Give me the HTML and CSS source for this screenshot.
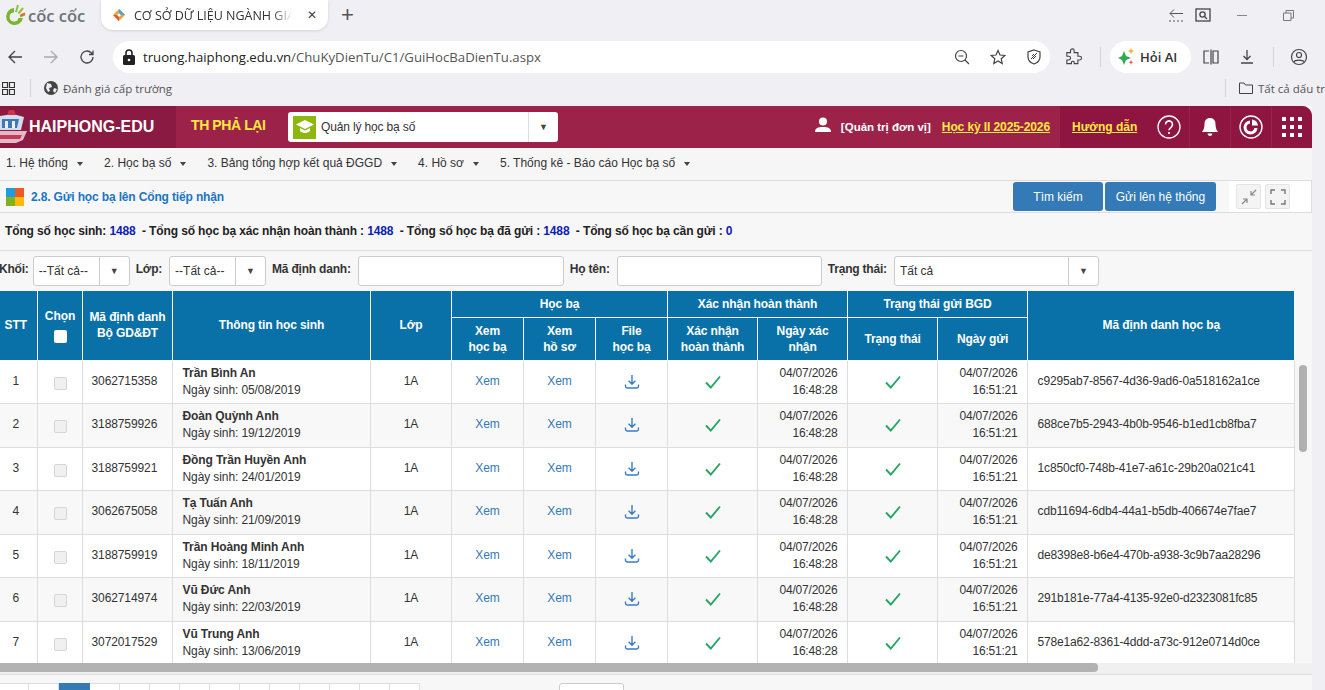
FILE: index.html
```html
<!DOCTYPE html>
<html lang="vi">
<head>
  <meta charset="UTF-8">
  <title>CƠ SỞ DỮ LIỆU NGÀNH GIÁO DỤC</title>
  <link rel="stylesheet" href="styles.css">
</head>
<body>
<svg class="defs" width="0" height="0">
  <symbol id="dl" viewBox="0 0 16 16"><path d="M8 1v9M4.6 6.8 8 10.2l3.4-3.4M1.5 10.5v1.8c0 1 .7 1.7 1.7 1.7h9.6c1 0 1.7-.7 1.7-1.7v-1.8" fill="none" stroke="#3a7cc4" stroke-width="1.4"/></symbol>
  <symbol id="ok" viewBox="0 0 16 14"><path d="M1 7.5 5.8 12.5 15 1.5" fill="none" stroke="#27a567" stroke-width="1.9"/></symbol>
</svg>

<!-- thanh trinh duyet -->
<div class="tabstrip">
  <div class="brand">
    <svg width="22" height="22" viewBox="0 0 22 22"><path d="M10 4a8.500 8.500 0 1 0 9 10h-4.500a4.500 4.500 0 1 1-4.500-5.500z" fill="#7ab52f"/><path d="M12 8l2-7M14.500 9.500 19 4M16 12.500l5-2" stroke="#8fc43a" stroke-width="2"/><path d="M16.500 11.500l4.500-2" stroke="#e8663a" stroke-width="2"/></svg>
    <span>cốc cốc</span>
  </div>
  <div class="tab">
    <svg width="14" height="14" viewBox="0 0 14 14"><path d="M7 1 13 7 7 13 1 7z" fill="#e8a33a"/><path d="M7 1 13 7 7 7z" fill="#3fa7d6"/><path d="M1 7 7 13 7 7z" fill="#e5533a"/><circle cx="7" cy="7" r="1.6" fill="#fff"/></svg>
    <span class="tab-title">CƠ SỞ DỮ LIỆU NGÀNH GIÁ</span>
    <span class="tab-x">✕</span>
  </div>
  <span class="newtab">+</span>
  <div class="winctl">
    <svg class="win-back" width="16" height="16" viewBox="0 0 16 16"><path d="M15 6.500H2M6 2.500 2 6.500l4 4" fill="none" stroke="#555"/><path d="M1 14h14" stroke="#555" stroke-dasharray="2 2"/></svg>
    <svg class="win-find" width="16" height="16" viewBox="0 0 16 16"><rect x="1" y="2" width="14" height="12" fill="none" stroke="#444" stroke-width="1.3"/><circle cx="7.500" cy="7.500" r="2.600" fill="none" stroke="#444" stroke-width="1.300"/><path d="M9.500 9.500 12 12" stroke="#444" stroke-width="1.300"/></svg>
    <span class="win-min"></span>
    <svg class="win-max" width="11" height="11" viewBox="0 0 11 11"><path d="M.5 3h7.500v7.500H.5zM3 3V.5h7.500V8H8" fill="none" stroke="#777"/></svg>
  </div>
</div>

<div class="toolbar">
  <svg class="nav" width="16" height="16" viewBox="0 0 16 16"><path d="M15 8H2M8 2 2 8l6 6" fill="none" stroke="#444" stroke-width="1.300"/></svg>
  <svg class="nav" width="16" height="16" viewBox="0 0 16 16"><path d="M1 8h13M8 2l6 6-6 6" fill="none" stroke="#aaa" stroke-width="1.300"/></svg>
  <svg class="nav" width="16" height="16" viewBox="0 0 16 16"><path d="M14 8a6 6 0 1 1-1.800-4.300L14 5.500M14 1.500v4h-4" fill="none" stroke="#444" stroke-width="1.300"/></svg>
  <div class="omnibox">
    <svg width="14" height="16" viewBox="0 0 14 16"><rect x="1" y="6" width="12" height="10" rx="1.500" fill="#222"/><path d="M4 6V4a3 3 0 0 1 6 0v2" fill="none" stroke="#222" stroke-width="1.600"/><circle cx="7" cy="11" r="1.300" fill="#fff"/></svg>
    <span class="url">truong.haiphong.edu.vn<em>/ChuKyDienTu/C1/GuiHocBaDienTu.aspx</em></span>
    <svg class="omni-icon" width="16" height="16" viewBox="0 0 16 16"><circle cx="7" cy="7" r="5.500" fill="none" stroke="#444" stroke-width="1.200"/><path d="M4.500 7h5M11 11l4 4" stroke="#444" stroke-width="1.200"/></svg>
    <svg class="omni-icon" width="16" height="16" viewBox="0 0 16 16"><path d="M8 1.500 10 6l4.800.5-3.600 3.200 1 4.800L8 12l-4.200 2.500 1-4.800L1.200 6.500 6 6z" fill="none" stroke="#444" stroke-width="1.200"/></svg>
    <svg class="omni-icon" width="16" height="16" viewBox="0 0 16 16"><path d="M8 1 14 3v5c0 3.500-2.500 5.800-6 7-3.500-1.200-6-3.500-6-7V3z" fill="none" stroke="#444" stroke-width="1.200"/><path d="M5 10l6-6M6 7l2-2M7 10l3-3" stroke="#444"/></svg>
  </div>
  <svg class="ext" width="18" height="18" viewBox="0 0 18 18"><path d="M2 5h4V3a2 2 0 0 1 4 0v2h4v4h2a2 2 0 0 1 0 4h-2v4H10v-2a2 2 0 0 0-3 0v2H2v-4h2a2 2 0 0 0 0-4H2z" fill="none" stroke="#444" stroke-width="1.200" transform="scale(.92)"/></svg>
  <span class="sep sep-a"></span>
  <div class="askai">
    <svg width="18" height="18" viewBox="0 0 18 18"><path d="M7 3 9 8l5 2-5 2-2 5-2-5-4-2 4-2z" fill="#2faa4f"/><path d="M14 0l1 2 2 1-2 1-1 2-1-2-2-1 2-1z" fill="#f2b632"/><path d="M14 12l.7 1.500 1.500.7-1.500.7L14 17l-.7-2.100-1.500-.7 1.500-.7z" fill="#e8574a"/></svg>
    <span>Hỏi AI</span>
  </div>
  <svg class="tool-split" width="16" height="16" viewBox="0 0 16 16"><path d="M6 2H1v12h5M10 2h5v12h-5zM8 .5v15" fill="none" stroke="#444" stroke-width="1.200"/></svg>
  <svg class="tool-down" width="16" height="16" viewBox="0 0 16 16"><path d="M8 1v9M4.500 7 8 10.500 11.500 7M2 14h12" fill="none" stroke="#444" stroke-width="1.300"/></svg>
  <span class="sep sep-b"></span>
  <svg class="tool-user" width="18" height="18" viewBox="0 0 18 18"><circle cx="9" cy="9" r="7.500" fill="none" stroke="#444" stroke-width="1.200"/><circle cx="9" cy="7" r="2.500" fill="none" stroke="#444" stroke-width="1.200"/><path d="M4 14c1-2.500 9-2.500 10 0" fill="none" stroke="#444" stroke-width="1.200"/></svg>
</div>

<div class="bookmarks">
  <svg width="13" height="13" viewBox="0 0 13 13"><path d="M.5.5h5v5h-5zM7.500.5h5v5h-5zM.5 7.500h5v5h-5zM7.500 7.500h5v5h-5z" fill="none" stroke="#333" stroke-width="1.200"/></svg>
  <span class="sep bm-sep"></span>
  <svg width="14" height="14" viewBox="0 0 14 14"><circle cx="7" cy="7" r="7" fill="#444"/><path d="M3 2l4 1 1 3-3 1 1 3-2 1-2-4zM10 7l3 1-2 4-2-2z" fill="#f0eff4"/></svg>
  <span class="bm-label">Đánh giá cấp trường</span>
  <span class="sep bm-right"></span>
  <svg width="14" height="12" viewBox="0 0 14 12"><path d="M.5 1h4.500l1.500 2h7v8.500H.5z" fill="none" stroke="#444"/></svg>
  <span class="bm-all">Tất cả dấu tr</span>
</div>

<!-- trang ung dung -->
<div class="app">
  <header class="app-head">
    <div class="logo">
      <svg width="29" height="38" viewBox="0 0 29 38"><path d="M0 8l13-2 11 3-3 13H0z" fill="#d6dcea"/><path d="M2 11h17l-2 9H2z" fill="#3d78b8"/><path d="M5 20v-7h3v7zM12 20v-7h3v7z" fill="#eef"/><path d="M9 2h5l2 5H7z" fill="#d3304a"/><path d="M0 23h27l-4 9-7 3H0z" fill="#e3b9c6"/><path d="M0 27h22l-2 4H0z" fill="#c43a5c"/></svg>
      <span>HAIPHONG-EDU</span>
    </div>
    <div class="school">TH PHẢ LẠI</div>
    <div class="module">
      <span class="module-ico"><svg width="18" height="14" viewBox="0 0 18 14"><path d="M9 0 18 4.500 9 9 0 4.500z" fill="#fff"/><path d="M4 8v3c2 2.500 8 2.500 10 0V8L9 10.500z" fill="#fff"/></svg></span>
      <span class="module-name">Quản lý học bạ số</span>
      <span class="module-arrow">▼</span>
    </div>
    <div class="head-right">
      <svg class="user" width="16" height="16" viewBox="0 0 16 16"><circle cx="8" cy="4.500" r="4" fill="#fff"/><path d="M0 15c0-4 3-5 8-5s8 1 8 5z" fill="#fff"/></svg>
      <span class="role">[Quản trị đơn vị]</span>
      <a class="yellow term">Học kỳ II 2025-2026</a>
    </div>
    <div class="head-dark">
      <a class="yellow guide">Hướng dẫn</a>
      <span class="hi"><svg width="24" height="24" viewBox="0 0 24 24"><circle cx="12" cy="12" r="11" fill="none" stroke="#fff" stroke-width="1.300"/><path d="M8.500 9.500a3.500 3.500 0 1 1 5.500 2.800c-1.300.9-2 1.500-2 3" fill="none" stroke="#fff" stroke-width="1.600"/><circle cx="12" cy="18" r="1.100" fill="#fff"/></svg></span>
      <span class="hi"><svg width="18" height="20" viewBox="0 0 18 20"><path d="M9 1c-3.500 0-5.500 2.500-5.500 6 0 4-1 6-2.500 8h16c-1.500-2-2.500-4-2.500-8 0-3.500-2-6-5.500-6z" fill="#fff"/><path d="M6.500 16.500a2.500 2.500 0 0 0 5 0z" fill="#fff"/></svg></span>
      <span class="hi"><svg width="24" height="24" viewBox="0 0 24 24"><circle cx="12" cy="12" r="11" fill="none" stroke="#fff" stroke-width="1.400"/><path d="M11 5.500a7 7 0 1 0 7.500 7.500h-3.200a3.900 3.900 0 1 1-4.300-4.400z" fill="#fff"/><path d="M13 4.500a7 7 0 0 1 6 6h-6z" fill="#fff"/></svg></span>
      <span class="hi"><svg width="20" height="20" viewBox="0 0 20 20" fill="#fff"><path d="M0 0h4v4H0zM8 0h4v4H8zM16 0h4v4h-4zM0 8h4v4H0zM8 8h4v4H8zM16 8h4v4h-4zM0 16h4v4H0zM8 16h4v4H8zM16 16h4v4h-4z"/></svg></span>
    </div>
  </header>

  <nav class="menu">
    <a>1. Hệ thống</a>
    <a>2. Học bạ số</a>
    <a>3. Bảng tổng hợp kết quả ĐGGD</a>
    <a>4. Hồ sơ</a>
    <a>5. Thống kê - Báo cáo Học bạ số</a>
  </nav>

  <div class="titlebar">
    <span class="winlogo"><i class="c1"></i><i class="c2"></i><i class="c3"></i><i class="c4"></i></span>
    <span class="page-title">2.8. Gửi học bạ lên Cổng tiếp nhận</span>
    <div class="actions">
      <button class="btn btn-search">Tìm kiếm</button>
      <button class="btn btn-send">Gửi lên hệ thống</button>
    </div>
    <div class="tools">
      <span class="tool-btn"><svg width="16" height="16" viewBox="0 0 16 16"><path d="M15 1 10 6M10 2v4h4M1 15l5-5M6 14v-4H2" fill="none" stroke="#888" stroke-width="1.200"/></svg></span>
      <span class="tool-btn"><svg width="16" height="16" viewBox="0 0 16 16"><path d="M1 5V1h4M11 1h4v4M15 11v4h-4M5 15H1v-4" fill="none" stroke="#777" stroke-width="1.400"/></svg></span>
    </div>
  </div>

  <div class="stats">
    Tổng số học sinh: <b>1488</b> &nbsp;- Tổng số học bạ xác nhận hoàn thành : <b>1488</b> &nbsp;- Tổng số học bạ đã gửi : <b>1488</b> &nbsp;- Tổng số học bạ cần gửi : <b>0</b>
  </div>

  <div class="filters">
    <label class="lb-khoi">Khối:</label>
    <div class="sel sel-s"><span>--Tất cả--</span><i>▼</i></div>
    <label>Lớp:</label>
    <div class="sel sel-s"><span>--Tất cả--</span><i>▼</i></div>
    <label>Mã định danh:</label>
    <div class="inp"></div>
    <label>Họ tên:</label>
    <div class="inp inp-b"></div>
    <label>Trạng thái:</label>
    <div class="sel sel-l"><span>Tất cả</span><i>▼</i></div>
  </div>

  <div class="grid-wrap">
    <table class="grid">
      <colgroup>
        <col class="c-stt"><col class="c-chon"><col class="c-ma"><col class="c-info"><col class="c-lop">
        <col class="c-x"><col class="c-x"><col class="c-x">
        <col class="c-d"><col class="c-d"><col class="c-d"><col class="c-d"><col class="c-uuid">
      </colgroup>
      <thead>
        <tr class="h1">
          <th rowspan="2">STT</th>
          <th rowspan="2">Chọn<br><span class="head-check"></span></th>
          <th rowspan="2">Mã định danh<br>Bộ GD&amp;ĐT</th>
          <th rowspan="2">Thông tin học sinh</th>
          <th rowspan="2">Lớp</th>
          <th colspan="3">Học bạ</th>
          <th colspan="2">Xác nhận hoàn thành</th>
          <th colspan="2">Trạng thái gửi BGD</th>
          <th rowspan="2">Mã định danh học bạ</th>
        </tr>
        <tr class="h2">
          <th>Xem<br>học bạ</th>
          <th>Xem<br>hồ sơ</th>
          <th>File<br>học bạ</th>
          <th>Xác nhận<br>hoàn thành</th>
          <th>Ngày xác<br>nhận</th>
          <th>Trạng thái</th>
          <th>Ngày gửi</th>
        </tr>
      </thead>
      <tbody>
        <tr>
          <td>1</td><td><span class="chk"></span></td><td class="ma">3062715358</td>
          <td class="info"><b>Trần Bình An</b><br>Ngày sinh: 05/08/2019</td><td>1A</td>
          <td class="lnk">Xem</td><td class="lnk">Xem</td><td><svg class="ic-dl"><use href="#dl"/></svg></td>
          <td><svg class="ic-ok"><use href="#ok"/></svg></td><td class="dt">04/07/2026<br>16:48:28</td>
          <td><svg class="ic-ok"><use href="#ok"/></svg></td><td class="dt">04/07/2026<br>16:51:21</td>
          <td class="uuid">c9295ab7-8567-4d36-9ad6-0a518162a1ce</td>
        </tr>
        <tr>
          <td>2</td><td><span class="chk"></span></td><td class="ma">3188759926</td>
          <td class="info"><b>Đoàn Quỳnh Anh</b><br>Ngày sinh: 19/12/2019</td><td>1A</td>
          <td class="lnk">Xem</td><td class="lnk">Xem</td><td><svg class="ic-dl"><use href="#dl"/></svg></td>
          <td><svg class="ic-ok"><use href="#ok"/></svg></td><td class="dt">04/07/2026<br>16:48:28</td>
          <td><svg class="ic-ok"><use href="#ok"/></svg></td><td class="dt">04/07/2026<br>16:51:21</td>
          <td class="uuid">688ce7b5-2943-4b0b-9546-b1ed1cb8fba7</td>
        </tr>
        <tr>
          <td>3</td><td><span class="chk"></span></td><td class="ma">3188759921</td>
          <td class="info"><b>Đồng Trần Huyền Anh</b><br>Ngày sinh: 24/01/2019</td><td>1A</td>
          <td class="lnk">Xem</td><td class="lnk">Xem</td><td><svg class="ic-dl"><use href="#dl"/></svg></td>
          <td><svg class="ic-ok"><use href="#ok"/></svg></td><td class="dt">04/07/2026<br>16:48:28</td>
          <td><svg class="ic-ok"><use href="#ok"/></svg></td><td class="dt">04/07/2026<br>16:51:21</td>
          <td class="uuid">1c850cf0-748b-41e7-a61c-29b20a021c41</td>
        </tr>
        <tr>
          <td>4</td><td><span class="chk"></span></td><td class="ma">3062675058</td>
          <td class="info"><b>Tạ Tuấn Anh</b><br>Ngày sinh: 21/09/2019</td><td>1A</td>
          <td class="lnk">Xem</td><td class="lnk">Xem</td><td><svg class="ic-dl"><use href="#dl"/></svg></td>
          <td><svg class="ic-ok"><use href="#ok"/></svg></td><td class="dt">04/07/2026<br>16:48:28</td>
          <td><svg class="ic-ok"><use href="#ok"/></svg></td><td class="dt">04/07/2026<br>16:51:21</td>
          <td class="uuid">cdb11694-6db4-44a1-b5db-406674e7fae7</td>
        </tr>
        <tr>
          <td>5</td><td><span class="chk"></span></td><td class="ma">3188759919</td>
          <td class="info"><b>Trần Hoàng Minh Anh</b><br>Ngày sinh: 18/11/2019</td><td>1A</td>
          <td class="lnk">Xem</td><td class="lnk">Xem</td><td><svg class="ic-dl"><use href="#dl"/></svg></td>
          <td><svg class="ic-ok"><use href="#ok"/></svg></td><td class="dt">04/07/2026<br>16:48:28</td>
          <td><svg class="ic-ok"><use href="#ok"/></svg></td><td class="dt">04/07/2026<br>16:51:21</td>
          <td class="uuid">de8398e8-b6e4-470b-a938-3c9b7aa28296</td>
        </tr>
        <tr>
          <td>6</td><td><span class="chk"></span></td><td class="ma">3062714974</td>
          <td class="info"><b>Vũ Đức Anh</b><br>Ngày sinh: 22/03/2019</td><td>1A</td>
          <td class="lnk">Xem</td><td class="lnk">Xem</td><td><svg class="ic-dl"><use href="#dl"/></svg></td>
          <td><svg class="ic-ok"><use href="#ok"/></svg></td><td class="dt">04/07/2026<br>16:48:28</td>
          <td><svg class="ic-ok"><use href="#ok"/></svg></td><td class="dt">04/07/2026<br>16:51:21</td>
          <td class="uuid">291b181e-77a4-4135-92e0-d2323081fc85</td>
        </tr>
        <tr>
          <td>7</td><td><span class="chk"></span></td><td class="ma">3072017529</td>
          <td class="info"><b>Vũ Trung Anh</b><br>Ngày sinh: 13/06/2019</td><td>1A</td>
          <td class="lnk">Xem</td><td class="lnk">Xem</td><td><svg class="ic-dl"><use href="#dl"/></svg></td>
          <td><svg class="ic-ok"><use href="#ok"/></svg></td><td class="dt">04/07/2026<br>16:48:28</td>
          <td><svg class="ic-ok"><use href="#ok"/></svg></td><td class="dt">04/07/2026<br>16:51:21</td>
          <td class="uuid">578e1a62-8361-4ddd-a73c-912e0714d0ce</td>
        </tr>
      </tbody>
    </table>
    <span class="vthumb"></span>
  </div>

  <div class="hscroll"><span class="hthumb"></span></div>

  <div class="pager">
    <div class="pages">
      <span></span><span></span><span class="on"></span><span></span><span></span><span></span><span></span><span></span><span></span><span></span><span></span><span></span><span></span><span></span>
    </div>
    <div class="page-size"></div>
  </div>
</div>
</body>
</html>
```

FILE: styles.css
```css
* {
  box-sizing: border-box;
}
html, body {
  margin: 0;
  height: 690px;
  overflow: hidden;
}
body {
  width: 1325px;
  background: #f0eff4;
  font-family: "Liberation Sans", Arial, sans-serif;
  font-size: 12px;
  color: #333;
}
.defs {
  position: absolute;
}

/* thanh trinh duyet */
.tabstrip {
  display: flex;
  align-items: center;
  height: 30px;
  padding-left: 4px;
}
.brand {
  display: flex;
  align-items: center;
  gap: 2px;
  width: 97px;
  font-family: "Open Sans", sans-serif;
  font-size: 16.500px;
  font-weight: 600;
  color: #6b7378;
  white-space: nowrap;
}
.tab {
  display: flex;
  align-items: center;
  width: 227px;
  height: 30px;
  padding: 0 11px;
  background: #fff;
  border-radius: 0 0 12px 12px;
  box-shadow: 0 1px 3px rgba(0, 0, 0, .12);
}
.tab-title {
  width: 158px;
  margin-left: 8px;
  overflow: hidden;
  white-space: nowrap;
  font-family: "Open Sans", sans-serif;
  font-size: 12.500px;
  color: #333;
  -webkit-mask-image: linear-gradient(90deg, #000 88%, transparent);
}
.tab-x {
  margin-left: 15px;
  font-size: 12px;
  color: #444;
}
.newtab {
  margin-left: 13px;
  font-size: 22px;
  font-weight: 300;
  color: #555;
}
.winctl {
  display: flex;
  align-items: center;
  margin-left: auto;
  padding-right: 31px;
}
.win-find {
  margin-left: 11px;
}
.win-min {
  width: 10px;
  height: 1px;
  margin-left: 26px;
  background: #888;
}
.win-max {
  margin-left: 36px;
}

.toolbar {
  display: flex;
  align-items: center;
  height: 48px;
  padding: 5px 0 0 7px;
}
.nav {
  margin-right: 20px;
}
.omnibox {
  display: flex;
  align-items: center;
  width: 937px;
  height: 32px;
  margin-left: -2px;
  padding: 0 8px 0 9px;
  background: #fff;
  border-radius: 16px;
}
.url {
  margin-left: 7px;
  flex: 1;
  font-family: "Open Sans", sans-serif;
  font-size: 13.2px;
  color: #222;
}
.url em {
  font-style: normal;
  color: #555;
}
.omni-icon {
  margin-left: 20px;
}
.ext {
  margin-left: 15px;
}
.sep {
  width: 1px;
  height: 20px;
  background: #d3d3d8;
}
.sep-a {
  margin-left: 17px;
}
.sep-b {
  margin-left: 18px;
}
.askai {
  display: flex;
  align-items: center;
  gap: 5px;
  width: 81px;
  height: 32px;
  margin-left: 9px;
  padding-left: 7px;
  background: #fff;
  border-radius: 16px;
  font-family: "Open Sans", sans-serif;
  font-size: 13px;
  font-weight: 600;
  color: #333;
}
.tool-split {
  margin-left: 12px;
}
.tool-down {
  margin-left: 20px;
}
.tool-user {
  margin-left: 16px;
}

.bookmarks {
  display: flex;
  align-items: center;
  height: 28px;
  padding: 0 0 8px 2px;
  font-family: "Open Sans", sans-serif;
  font-size: 11.500px;
  color: #555;
}
.bm-sep {
  height: 18px;
  margin: 0 13px 0 15px;
}
.bm-label {
  margin-left: 5px;
  white-space: nowrap;
}
.bm-right {
  height: 18px;
  margin: 0 13px 0 1053px;
}
.bm-all {
  margin-left: 5px;
  white-space: nowrap;
}

/* trang ung dung */
.app {
  width: 1312px;
  height: 584px;
  background: #f7f7f7;
}
.app-head {
  display: flex;
  align-items: stretch;
  height: 42px;
  background: #9d2249;
  border-radius: 0 10px 0 0;
  overflow: hidden;
}
.logo {
  display: flex;
  align-items: center;
  width: 176px;
  background: #8a1a41;
  color: #fff;
  font-size: 16px;
  font-weight: bold;
}
.logo svg {
  flex: none;
}
.school {
  width: 112px;
  padding: 11px 0 0 15px;
  color: #ffe93c;
  font-size: 14px;
  font-weight: bold;
  letter-spacing: -.4px;
}
.module {
  display: flex;
  align-items: center;
  width: 270px;
  height: 30px;
  margin-top: 6px;
  padding-left: 5px;
  background: #fff;
  border-radius: 3px;
}
.module-ico {
  display: flex;
  align-items: center;
  justify-content: center;
  width: 23px;
  height: 23px;
  background: #8db70c;
}
.module-name {
  flex: 1;
  margin-left: 5px;
  color: #333;
  letter-spacing: -.15px;
}
.module-arrow {
  width: 30px;
  height: 30px;
  line-height: 30px;
  border-left: 1px solid #ddd;
  text-align: center;
  font-size: 9px;
  color: #444;
}
.head-right {
  display: flex;
  align-items: center;
  margin-left: auto;
  color: #fff;
  font-weight: bold;
}
.role {
  margin-left: 10px;
  font-size: 11.500px;
}
.user {
  margin-top: -4px;
}
.yellow {
  color: #ffe93c;
  font-size: 12px;
  font-weight: bold;
  text-decoration: underline;
}
.term {
  margin-left: 11px;
  margin-right: 10px;
  letter-spacing: -.1px;
}
.head-dark {
  display: flex;
  align-items: center;
  width: 252px;
  padding-left: 12px;
  background: #8d1540;
}
.guide {
  margin-right: auto;
  white-space: nowrap;
}
.hi {
  display: flex;
  align-items: center;
  justify-content: center;
  width: 41px;
  height: 42px;
  border-left: 1px solid rgba(255, 255, 255, .07);
}
.hi:nth-of-type(1) {
  border-left: 0;
}
.menu {
  display: flex;
  height: 33px;
  padding-left: 6px;
  border-bottom: 1px solid #ddd;
  background: #f6f6f6;
  line-height: 30px;
}
.menu a {
  margin-right: 21px;
  white-space: nowrap;
  color: #333;
}
.menu a::after {
  content: "";
  display: inline-block;
  margin-left: 9px;
  vertical-align: middle;
  border-top: 4px solid #444;
  border-left: 3px solid transparent;
  border-right: 3px solid transparent;
}
.titlebar {
  display: flex;
  align-items: center;
  height: 32px;
  padding-left: 6px;
  border-bottom: 1px solid #ddd;
}
.winlogo {
  display: grid;
  grid-template-columns: 9px 9px;
  grid-template-rows: 9px 9px;
}
.winlogo .c1 { background: #1f9be0; }
.winlogo .c2 { background: #ee5a24; }
.winlogo .c3 { background: #7fb21c; }
.winlogo .c4 { background: #fdb90e; }
.page-title {
  margin-left: 7px;
  font-weight: bold;
  color: #1a75c4;
  letter-spacing: -.15px;
}
.actions {
  display: flex;
  gap: 2px;
  margin-left: auto;
}
.btn {
  height: 29px;
  border: 0;
  border-radius: 3px;
  background: #337ab7;
  color: #fff;
  font-family: inherit;
  font-size: 12px;
}
.btn-search {
  width: 90px;
}
.btn-send {
  width: 111px;
}
.tools {
  display: flex;
  align-items: center;
  gap: 4px;
  width: 83px;
  height: 31px;
  margin-left: 13px;
  padding: 0 14px 0 7px;
  background: #fff;
  border-right: 1px solid #ddd;
}
.tool-btn {
  display: flex;
  align-items: center;
  justify-content: center;
  width: 25px;
  height: 25px;
  background: #f4f4f4;
  border: 1px solid #e4e4e4;
  border-radius: 2px;
}
.stats {
  height: 38px;
  padding-left: 5px;
  border-bottom: 1px solid #ddd;
  line-height: 36px;
  font-weight: bold;
  color: #222;
  white-space: nowrap;
  letter-spacing: -.125px;
}
.stats b {
  color: #0a1eb4;
}
.filters {
  display: flex;
  align-items: center;
  height: 40px;
  padding-bottom: 1px;
}
.filters label {
  margin: 0 7px 0 6px;
  padding-bottom: 3px;
  font-weight: bold;
  color: #333;
  letter-spacing: -.2px;
}
.filters label.lb-khoi {
  margin: 0 4px 0 -1px;
}
.sel {
  display: flex;
  align-items: center;
  height: 30px;
  background: #fff;
  border: 1px solid #ccc;
  border-radius: 3px;
}
.sel span {
  flex: 1;
  padding-left: 5px;
}
.sel i {
  width: 30px;
  height: 28px;
  border-left: 1px solid #ccc;
  line-height: 28px;
  text-align: center;
  font-size: 9px;
  font-style: normal;
  color: #444;
}
.sel-s {
  width: 97px;
}
.sel-l {
  width: 205px;
}
.inp {
  width: 206px;
  height: 30px;
  background: #fff;
  border: 1px solid #ccc;
  border-radius: 3px;
}
.inp-b {
  width: 205px;
}

/* bang hoc ba */
.grid-wrap {
  position: relative;
  height: 372px;
  background: #f7f7f7;
  overflow: hidden;
}
.grid {
  width: 1294px;
  table-layout: fixed;
  border-collapse: collapse;
}
.c-stt { width: 37px; }
.c-chon { width: 45px; }
.c-ma { width: 90px; }
.c-info { width: 198px; }
.c-lop { width: 81px; }
.c-x { width: 72px; }
.c-d { width: 90px; }
.c-uuid { width: 267px; }
.grid th {
  padding: 0 0 0 1px;
  border: 1px solid #fff;
  background: #0a70a8;
  color: #fff;
  line-height: 16px;
  font-weight: bold;
  text-align: center;
  letter-spacing: -.1px;
}
.grid thead tr:first-child th {
  border-top: 0;
}
.grid thead tr:first-child th:first-child {
  padding: 0 5px 0 0;
}
.grid th:first-child {
  border-left: 0;
}
.grid th:last-child {
  border-right: 0;
}
.h1 {
  height: 26px;
}
.h2 {
  height: 43px;
}
.head-check {
  display: inline-block;
  width: 13px;
  height: 13px;
  margin-top: 6px;
  background: #fff;
  border-radius: 2px;
  vertical-align: top;
}
.grid td {
  height: 43.500px;
  padding: 0 0 1px 1px;
  border: 1px solid #ddd;
  background: #fff;
  text-align: center;
  line-height: 17px;
  color: #333;
  letter-spacing: -.1px;
}
.grid td:first-child {
  padding: 0 5px 1px 0;
  border-left: 0;
}
.grid tbody tr:nth-child(even) td {
  background: #f8f8f8;
}
.grid td.ma {
  padding-left: 9px;
  text-align: left;
}
.grid td.info {
  padding: 0 0 0 10px;
  text-align: left;
}
.grid td.dt {
  padding: 0 9px 0 0;
  text-align: right;
  letter-spacing: -.2px;
}
.grid td.uuid {
  padding-left: 10px;
  text-align: left;
  letter-spacing: -.165px;
}
.grid td.lnk {
  color: #337ab7;
}
.chk {
  display: inline-block;
  width: 13px;
  height: 13px;
  margin-top: 3px;
  background: #f0f0f0;
  border: 1px solid #d5d5d5;
  border-radius: 2px;
  vertical-align: middle;
}
.ic-dl {
  width: 16px;
  height: 16px;
  vertical-align: middle;
}
.ic-ok {
  width: 16px;
  height: 14px;
  vertical-align: middle;
}
.vthumb {
  position: absolute;
  top: 74px;
  left: 1299px;
  width: 8px;
  height: 87px;
  background: #b0b0b0;
  border-radius: 4px;
}
.hscroll {
  height: 11px;
  background: #f0f0f0;
}
.hthumb {
  display: block;
  width: 1098px;
  height: 9px;
  background: #b2b2b2;
  border-radius: 0 4px 4px 0;
}
.pager {
  display: flex;
  height: 17px;
  padding-top: 8px;
  border-top: 1px solid #ddd;
}
.pages {
  display: flex;
  margin-left: -1px;
}
.pages span {
  width: 30px;
  height: 12px;
  background: #fff;
  border: 1px solid #ddd;
  border-left: 0;
}
.pages .on {
  width: 31px;
  background: #337ab7;
  border-color: #337ab7;
}
.page-size {
  width: 65px;
  height: 12px;
  margin-left: 139px;
  background: #fff;
  border: 1px solid #ccc;
  border-radius: 3px 3px 0 0;
}
```
